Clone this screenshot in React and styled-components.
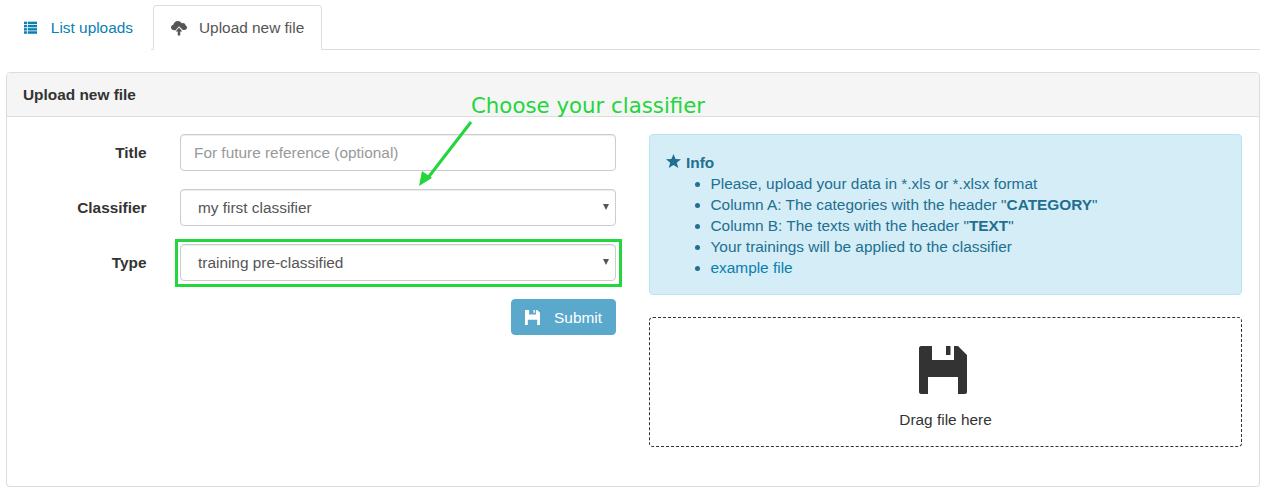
import styled, { createGlobalStyle } from "styled-components";

const GlobalStyle = createGlobalStyle`
  * { box-sizing: border-box; }
  body {
    margin: 0;
    background: #fff;
    color: #333;
    font-family: "Liberation Sans", Arial, sans-serif;
    font-size: 15.4px;
    line-height: 21px;
  }
`;

function ListIcon() {
  return (
    <svg width="16" height="15" viewBox="0 0 16 15" fill="currentColor">
      <rect x="0" y="0.5" width="3.5" height="3" />
      <rect x="4.5" y="0.5" width="11.5" height="3" />
      <rect x="0" y="4.5" width="3.5" height="2.8" />
      <rect x="4.5" y="4.5" width="11.5" height="2.8" />
      <rect x="0" y="8.3" width="3.5" height="2.8" />
      <rect x="4.5" y="8.3" width="11.5" height="2.8" />
      <rect x="0" y="12" width="3.5" height="3" />
      <rect x="4.5" y="12" width="11.5" height="3" />
    </svg>
  );
}

function CloudIcon() {
  return (
    <svg width="16" height="16" viewBox="0 0 17 16" fill="currentColor">
      <path d="M3.5 10.5C1.5 10.5 0 9.2 0 7.5 0 6 1 4.9 2.5 4.6 3 2.2 5 .5 7.3.5c1.9 0 3.5 1 4.3 2.6 .4-.2 .8-.3 1.2-.3 1.5 0 2.6 1.1 2.7 2.5 .9 .4 1.5 1.2 1.5 2.2 0 1.4-1.2 2.5-2.8 2.5h-1.6L8.5 6.2 4.9 10.5z" />
      <path d="M8.5 7.5 12 11.7H9.8V16H7.2V11.7H5z" />
    </svg>
  );
}

function StarIcon() {
  return (
    <svg width="15" height="14" viewBox="0 0 15 14" fill="currentColor">
      <path d="M7.5 0 9.6 5 15 5.3 10.8 8.7 12.3 14 7.5 11 2.7 14 4.2 8.7 0 5.3 5.4 5z" />
    </svg>
  );
}

function FloppyIcon({ size }) {
  return (
    <svg width={size} height={size} viewBox="0 0 48 48" fill="currentColor">
      <path d="M2 0H13V14H35V0H39L48 9V46C48 47 47 48 46 48H39V31H9V48H2C1 48 0 47 0 46V2C0 1 1 0 2 0Z" />
      <rect x="27" y="0" width="4.5" height="9" />
    </svg>
  );
}

export default function App() {
  return (
    <Page>
      <GlobalStyle />
      <Tabs>
        <Tab>
          <ListIcon />
          List uploads
        </Tab>
        <Tab active>
          <CloudIcon />
          Upload new file
        </Tab>
      </Tabs>

      <Panel>
        <PanelHeading>Upload new file</PanelHeading>
        <PanelBody>
          <FormColumn>
            <FormRow>
              <Label>Title</Label>
              <TextInput placeholder="For future reference (optional)" />
            </FormRow>
            <FormRow>
              <Label>Classifier</Label>
              <SelectWrap>
                <Select defaultValue="first">
                  <option value="first">my first classifier</option>
                </Select>
              </SelectWrap>
            </FormRow>
            <FormRow>
              <Label>Type</Label>
              <Highlighted>
                <SelectWrap>
                  <Select defaultValue="training">
                    <option value="training">training pre-classified</option>
                  </Select>
                </SelectWrap>
              </Highlighted>
            </FormRow>
            <SubmitRow>
              <SubmitButton>
                <FloppyIcon size={15} />
                Submit
              </SubmitButton>
            </SubmitRow>
          </FormColumn>

          <SideColumn>
            <InfoBox>
              <InfoTitle>
                <StarIcon />
                Info
              </InfoTitle>
              <InfoList>
                <li>Please, upload your data in *.xls or *.xlsx format</li>
                <li>Column A: The categories with the header "<b>CATEGORY</b>"</li>
                <li>Column B: The texts with the header "<b>TEXT</b>"</li>
                <li>Your trainings will be applied to the classifier</li>
                <li><InfoLink>example file</InfoLink></li>
              </InfoList>
            </InfoBox>
            <DropZone>
              <FloppyIcon size={48} />
              <span>Drag file here</span>
            </DropZone>
          </SideColumn>

          <Callout>Choose your classifier</Callout>
          <CalloutArrow width="60" height="72" viewBox="0 0 60 72">
            <path d="M53 3 9 60" stroke="#22d63c" strokeWidth="3" fill="none" />
            <path d="M1 67 4 52 14 59z" fill="#22d63c" />
          </CalloutArrow>
        </PanelBody>
      </Panel>
    </Page>
  );
}

const Page = styled.div`
  padding: 5px 6px 0;
`;

const Tabs = styled.div`
  display: flex;
  height: 45px;
  border-bottom: 1px solid #ddd;
`;

const Tab = styled.div`
  display: flex;
  flex-shrink: 0;
  align-items: center;
  gap: ${props => props.active ? "12px" : "13.5px"};
  height: 45px;
  padding: 0 17px;
  border: 1px solid ${props => props.active ? "#ddd" : "transparent"};
  border-bottom-color: ${props => props.active ? "#fff" : "transparent"};
  border-radius: 4px 4px 0 0;
  background: #fff;
  color: ${props => props.active ? "#555" : "#0a7fb0"};
  margin-right: 2px;
  white-space: nowrap;
  ${props => props.active ? "" : "width: 145px;"}
`;

const Panel = styled.div`
  margin-top: 22px;
  height: 415px;
  border: 1px solid #ddd;
  border-radius: 4px;
  box-shadow: 0 1px 1px rgba(0, 0, 0, 0.05);
`;

const PanelHeading = styled.div`
  height: 44px;
  padding: 11px 16px;
  background: #f5f5f5;
  border-bottom: 1px solid #ddd;
  border-radius: 3px 3px 0 0;
  font-weight: bold;
`;

const PanelBody = styled.div`
  position: relative;
  display: flex;
  gap: 33px;
  padding: 17px 17px 0 0;
`;

const FormColumn = styled.div`
  width: 609px;
`;

const FormRow = styled.div`
  display: flex;
  align-items: center;
  gap: 33.5px;
  height: 37px;
  margin-bottom: 18px;
`;

const Label = styled.label`
  width: 139.5px;
  text-align: right;
  font-weight: bold;
`;

const TextInput = styled.input`
  flex: 1;
  min-width: 0;
  height: 37px;
  padding: 6px 13px;
  border: 1px solid #ccc;
  border-radius: 4px;
  box-shadow: inset 0 1px 1px rgba(0, 0, 0, 0.075);
  font: inherit;
  color: #555;
  &::placeholder { color: #999; opacity: 1; }
`;

const SelectWrap = styled.div`
  position: relative;
  flex: 1;
  min-width: 0;

  &::after {
    content: "";
    position: absolute;
    top: 15px;
    right: 7px;
    border-left: 3.5px solid transparent;
    border-right: 3.5px solid transparent;
    border-top: 6px solid #555;
    pointer-events: none;
  }
`;

const Select = styled.select`
  display: block;
  width: 100%;
  height: 37px;
  padding: 6px 17px;
  appearance: none;
  border: 1px solid #ccc;
  border-radius: 4px;
  background: #fff;
  box-shadow: inset 0 1px 1px rgba(0, 0, 0, 0.075);
  font: inherit;
  color: #555;
`;

const Highlighted = styled.div`
  flex: 1;
  min-width: 0;
  margin: -5px -6px -6px -5px;
  padding: 2px 3px 3px 2px;
  border: 3px solid #22d63c;
`;

const SubmitRow = styled.div`
  display: flex;
  justify-content: flex-end;
`;

const SubmitButton = styled.button`
  display: flex;
  align-items: center;
  gap: 14px;
  height: 36px;
  padding: 0 13px;
  border: 1px solid #5ba8cd;
  border-radius: 4px;
  background: #5ba8cd;
  color: #fff;
  font: inherit;
`;

const SideColumn = styled.div`
  flex: 1;
  min-width: 0;
`;

const InfoBox = styled.div`
  height: 161px;
  padding: 17px 16px;
  background: #d4edf7;
  border: 1px solid #b5e6f1;
  border-radius: 4px;
  color: #226f8f;
`;

const InfoTitle = styled.div`
  display: flex;
  align-items: center;
  gap: 5px;
  font-weight: bold;

  svg { margin-top: -3px; }
`;

const InfoList = styled.ul`
  margin: 0;
  padding-left: 44.5px;
`;

const InfoLink = styled.a`
  color: #0a7fb0;
`;

const DropZone = styled.div`
  display: flex;
  flex-direction: column;
  align-items: center;
  gap: 15px;
  height: 130px;
  margin-top: 22px;
  padding-top: 28px;
  border: 1px dashed #333;
  border-radius: 4px;

  svg { margin-right: 5px; }
`;

const Callout = styled.div`
  position: absolute;
  left: 464px;
  top: -24px;
  color: #22d63c;
  font-family: "DejaVu Sans", sans-serif;
  font-size: 21.3px;
  line-height: 26px;
`;

const CalloutArrow = styled.svg`
  position: absolute;
  left: 411px;
  top: 2px;
`;
